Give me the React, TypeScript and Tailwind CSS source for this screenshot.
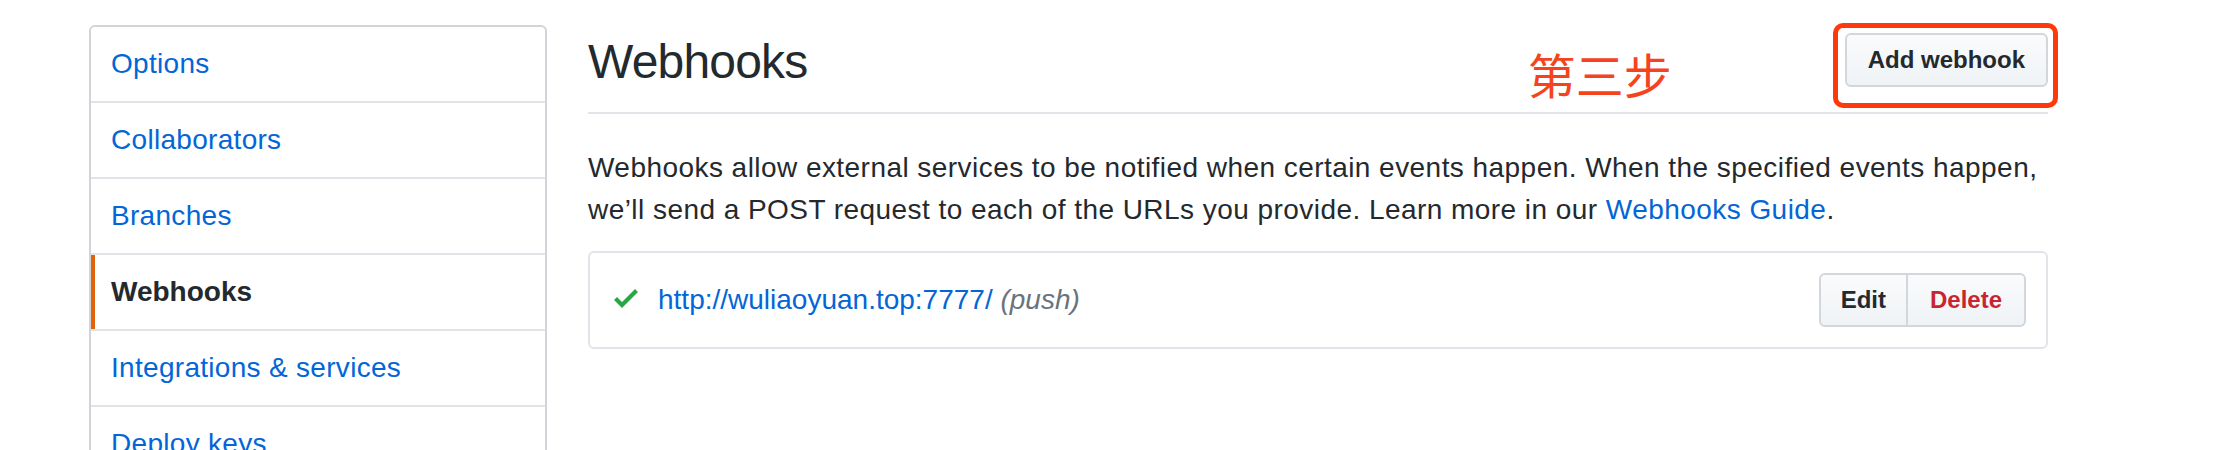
const sans = { fontFamily: '"Liberation Sans", Arial, sans-serif' };

const menuItems = [
  { label: "Options" },
  { label: "Collaborators" },
  { label: "Branches" },
  { label: "Webhooks", selected: true },
  { label: "Integrations & services" },
  { label: "Deploy keys" },
  { label: "Notifications" },
];

function CheckIcon() {
  return (
    <svg viewBox="0 0 12 16" className="w-[24px] h-[32px] -mt-[4px] shrink-0" fill="#28a745">
      <path d="M12 5l-8 8-4-4 1.5-1.5L4 10l6.5-6.5L12 5z" />
    </svg>
  );
}

function Sidebar() {
  return (
    <nav className="w-[458px] shrink-0 border-2 border-[#d1d5da] rounded-[6px] overflow-hidden">
      {menuItems.map((item, i) => (
        <div
          key={item.label}
          className={
            (i > 0 ? "h-[76px] border-t-2 border-[#e1e4e8] " : "h-[74px] ") +
            "flex items-stretch"
          }
        >
          {item.selected ? (
            <div className="flex-1 flex items-center border-l-4 border-[#e36209] pl-[16px] text-[28px] font-bold text-[#24292e]">
              {item.label}
            </div>
          ) : (
            <div className="flex-1 flex items-center pl-[20px] text-[28px] tracking-[0.3px] text-[#0366d6]">
              {item.label}
            </div>
          )}
        </div>
      ))}
    </nav>
  );
}

function Header() {
  return (
    <div className="h-[89px] flex items-start border-b-2 border-[#e1e4e8]">
      <h2 className="mt-[7px] text-[48px] leading-[60px] font-normal tracking-[-0.8px] text-[#24292e]">
        Webhooks
      </h2>
      <span
        className="ml-auto mt-[24px] text-[48px] leading-[48px] text-[#f4431d]"
        style={{ fontFamily: '"Noto Sans CJK SC", sans-serif' }}
      >
        第三步
      </span>
      <div className="relative ml-[173px] mt-[8px]">
        <button className="h-[54px] px-[21px] border-2 border-[#d3d6da] rounded-[6px] bg-gradient-to-b from-[#fafbfc] to-[#eff3f6] text-[24px] font-bold text-[#24292e]">
          Add webhook
        </button>
        <div className="absolute -left-[12px] -top-[10px] -right-[10px] -bottom-[21px] border-[5px] border-[#fc3a0c] rounded-[10px] pointer-events-none" />
      </div>
    </div>
  );
}

function HookRow() {
  return (
    <div className="mt-[20px] h-[98px] border-2 border-[#e1e4e8] rounded-[6px] flex items-center pl-[24px] pr-[20px]">
      <CheckIcon />
      <div className="ml-[20px] text-[28px] leading-[40px]">
        <a className="text-[#0366d6]">http://wuliaoyuan.top:7777/</a>{" "}
        <span className="italic text-[#6a737d]">(push)</span>
      </div>
      <div className="ml-auto flex">
        <button className="h-[54px] px-[20px] border-2 border-[#d3d6da] rounded-l-[6px] bg-gradient-to-b from-[#fafbfc] to-[#eff3f6] text-[24px] font-bold text-[#24292e]">
          Edit
        </button>
        <button className="h-[54px] px-[22px] border-2 border-l-0 border-[#d3d6da] rounded-r-[6px] bg-gradient-to-b from-[#fafbfc] to-[#eff3f6] text-[24px] font-bold text-[#cb2431]">
          Delete
        </button>
      </div>
    </div>
  );
}

export default function App() {
  return (
    <div className="h-[450px] overflow-hidden bg-white" style={sans}>
      <div className="flex pl-[89px] pt-[25px]">
        <Sidebar />
        <main className="ml-[41px] w-[1460px]">
          <Header />
          <p className="mt-[33px] text-[28px] leading-[42px] tracking-[0.45px] text-[#24292e]">
            Webhooks allow external services to be notified when certain events happen. When the specified events happen,
            <br />
            we’ll send a POST request to each of the URLs you provide. Learn more in our{" "}
            <a className="text-[#0366d6]">Webhooks Guide</a>.
          </p>
          <HookRow />
        </main>
      </div>
    </div>
  );
}
